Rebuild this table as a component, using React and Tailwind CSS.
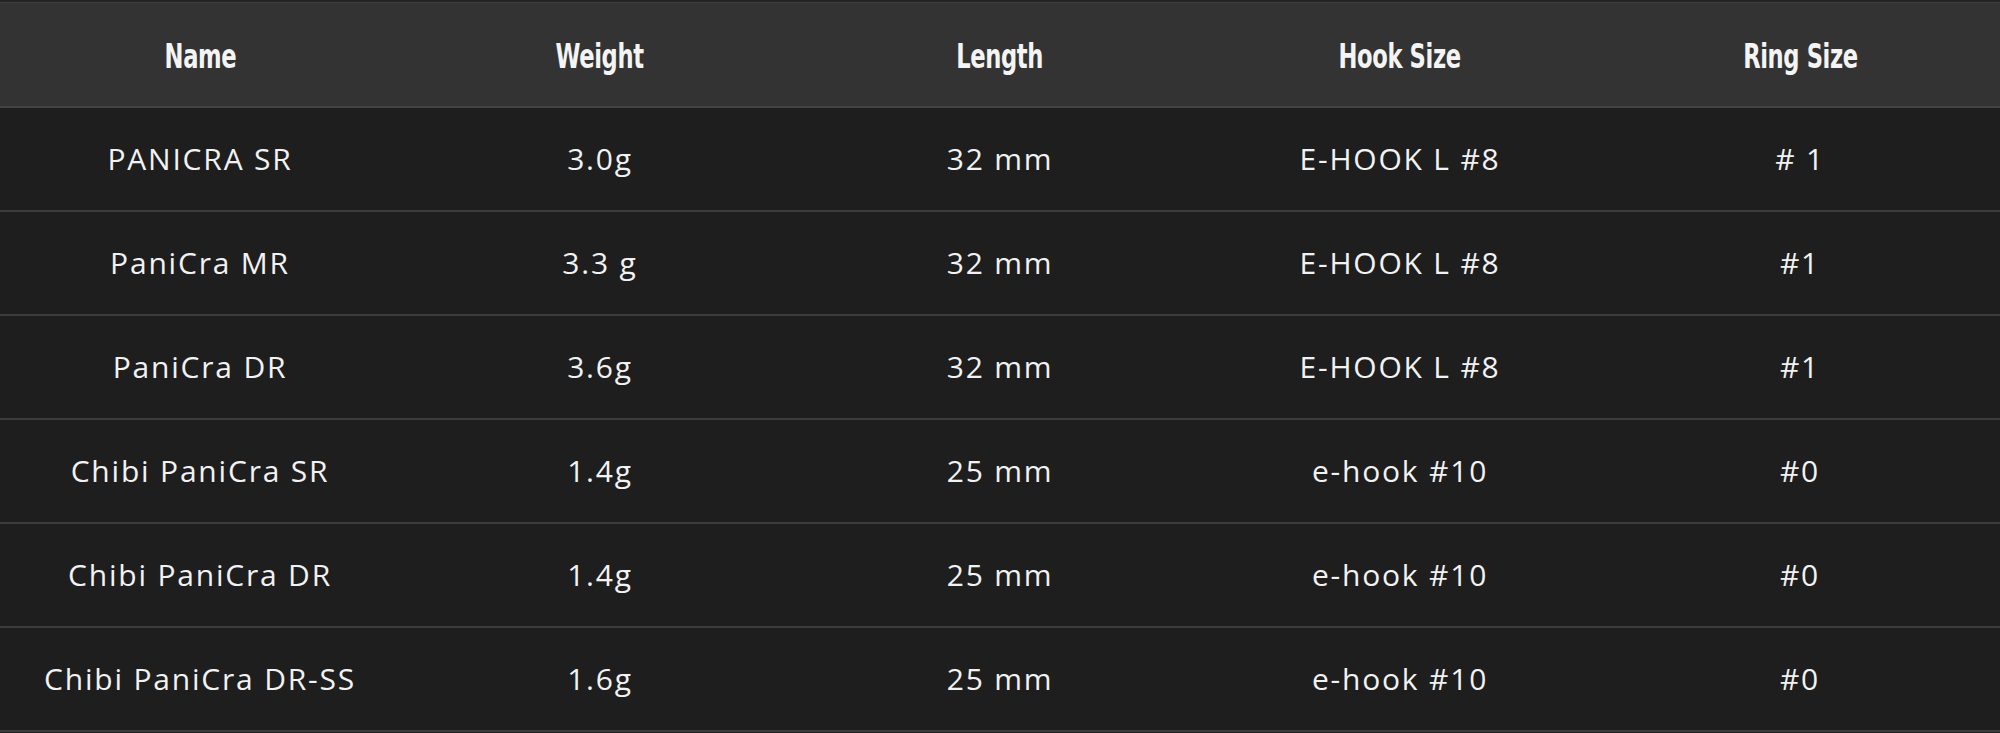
const columns = ["Name", "Weight", "Length", "Hook Size", "Ring Size"];

const rows = [
  ["PANICRA SR", "3.0g", "32 mm", "E-HOOK L #8", "# 1"],
  ["PaniCra MR", "3.3 g", "32 mm", "E-HOOK L #8", "#1"],
  ["PaniCra DR", "3.6g", "32 mm", "E-HOOK L #8", "#1"],
  ["Chibi PaniCra SR", "1.4g", "25 mm", "e-hook #10", "#0"],
  ["Chibi PaniCra DR", "1.4g", "25 mm", "e-hook #10", "#0"],
  ["Chibi PaniCra DR-SS", "1.6g", "25 mm", "e-hook #10", "#0"],
];

export default function App() {
  return (
    <div className="w-[2000px] h-[733px] bg-[#1e1e1e] border-t-2 border-[#232323] overflow-hidden">
      <table className="w-full table-fixed border-collapse">
        <thead>
          <tr className="h-[104px] bg-[#333333] border-t border-[#3d3d3d] border-b-2 border-b-[#434343]">
            {columns.map((c) => (
              <th
                key={c}
                className="text-center font-bold text-[34px] pt-1 text-[#f4f4f4] font-['DejaVu_Sans_Condensed','Liberation_Sans',sans-serif]"
              >
                <span className="inline-block scale-x-[0.74] tracking-[-0.5px]">{c}</span>
              </th>
            ))}
          </tr>
        </thead>
        <tbody>
          {rows.map((r, i) => (
            <tr key={i} className="h-[104px] border-b-2 border-[#3b3b3b]">
              {r.map((cell, j) => (
                <td
                  key={j}
                  className="text-center text-[30px] tracking-[1.8px] text-[#f2f2f2] font-['Open_Sans',sans-serif]"
                >
                  {cell}
                </td>
              ))}
            </tr>
          ))}
        </tbody>
      </table>
    </div>
  );
}
